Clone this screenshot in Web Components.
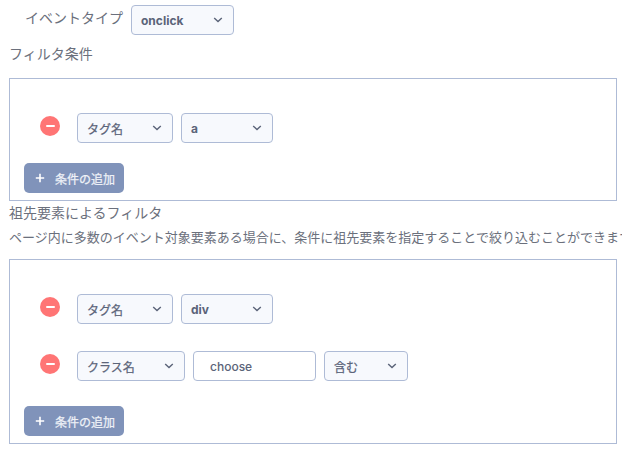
<!DOCTYPE html>
<html lang="ja"><head><meta charset="utf-8">
<style>
html,body{margin:0;padding:0;background:#fff;overflow:hidden;width:622px;height:450px}
body{font-family:"Noto Sans","Noto Sans CJK JP",sans-serif;color:#5a6172}
.j{font-weight:400;-webkit-text-stroke:.25px #5b6479}
</style></head><body>
<template id="t-select"><style>
:host{display:inline-flex;box-sizing:border-box;height:30px;align-items:center;justify-content:space-between;background:#f7f9fd;border:1px solid #aebbd6;border-radius:4px;padding:0 10px 0 9px;font:700 12px Inter,"Noto Sans CJK JP",sans-serif;color:#5b6479;flex:none}
svg{width:10px;height:6px;display:block}
</style><span><slot></slot></span><svg viewBox="0 0 10 6"><path d="M1.2 1l3.8 3.6L8.8 1" fill="none" stroke="#5b6479" stroke-width="1.4"/></svg></template>

<template id="t-minus"><style>
:host{display:block;width:20px;height:20px;border-radius:50%;background:#ff7575;position:relative;flex:none;margin:0 9px 4px 0}
i{position:absolute;left:5.5px;top:8.8px;width:9px;height:2.2px;border-radius:1px;background:#fff}
</style><i></i></template>

<template id="t-add"><style>
:host{display:inline-flex;box-sizing:border-box;width:100px;height:30px;align-items:center;background:#8093ba;border-radius:5px;color:#eef1f7;font:400 12px "Noto Sans CJK JP",sans-serif;-webkit-text-stroke:.25px #eef1f7;padding-left:11px;gap:10px}
svg{width:10px;height:10px;display:block;flex:none}
</style><svg viewBox="0 0 10 10"><path d="M5 .8v8.4M.8 5h8.4" stroke="#fff" stroke-width="1.6"/></svg><span><slot></slot></span></template>

<template id="t-row"><style>
:host{display:flex;align-items:center;gap:8px;padding-left:16px;height:30px}
</style><slot></slot></template>

<template id="t-box"><style>
:host{display:flex;flex-direction:column;box-sizing:border-box;width:608px;margin-left:9px;border:1px solid #aebbd6;padding:34px 14px 7px;background:#fff}
.rows{display:flex;flex-direction:column;gap:27px}
.foot{margin-top:var(--foot-gap,20px);display:flex}
</style><div class="rows"><slot></slot></div><div class="foot"><slot name="foot"></slot></div></template>

<template id="t-label"><style>
:host{display:block;font:14px/18px "Noto Sans CJK JP",sans-serif;color:#6b707c;white-space:nowrap;margin-left:9px}
</style><slot></slot></template>

<template id="t-top"><style>
:host{display:flex;align-items:center;gap:8px;padding:5px 0 0 25px;height:30px;font:14px "Noto Sans CJK JP",sans-serif;color:#6b707c}
span{margin-bottom:7px;width:98px;white-space:nowrap}
</style><span><slot name="label"></slot></span><slot></slot></template>

<template id="t-input"><style>
:host{display:flex;box-sizing:border-box;height:30px;align-items:center;background:#fff;border:1px solid #aebbd6;border-radius:4px;padding-left:16px;font:500 12px Inter,"Noto Sans CJK JP",sans-serif;color:#5b6479;flex:none}
</style><slot></slot></template>

<top-row><span slot="label">イベントタイプ</span><cond-select style="width:103px">onclick</cond-select></top-row>
<text-label style="margin-top:9px">フィルタ条件</text-label>
<cond-box style="margin-top:16px;height:123px">
  <cond-row><cond-minus></cond-minus><cond-select style="width:96px"><span class="j">タグ名</span></cond-select><cond-select style="width:92px">a</cond-select></cond-row>
  <add-button slot="foot">条件の追加</add-button>
</cond-box>
<text-label style="margin-top:2px">祖先要素によるフィルタ</text-label>
<text-label style="margin-top:7px;font-size:13px">ページ内に多数のイベント対象要素ある場合に、条件に祖先要素を指定することで絞り込むことができます。</text-label>
<cond-box style="margin-top:13px;height:185px;--foot-gap:25px">
  <cond-row><cond-minus></cond-minus><cond-select style="width:96px"><span class="j">タグ名</span></cond-select><cond-select style="width:92px">div</cond-select></cond-row>
  <cond-row><cond-minus></cond-minus><cond-select style="width:108px"><span class="j">クラス名</span></cond-select><cond-input style="width:123px">choose</cond-input><cond-select style="width:84px"><span class="j">含む</span></cond-select></cond-row>
  <add-button slot="foot">条件の追加</add-button>
</cond-box>
<script>
const reg=(n,t)=>customElements.define(n,class extends HTMLElement{constructor(){super();this.attachShadow({mode:"open"}).appendChild(document.getElementById(t).content.cloneNode(true))}});
reg("cond-select","t-select");reg("cond-minus","t-minus");reg("add-button","t-add");reg("cond-row","t-row");reg("cond-box","t-box");reg("text-label","t-label");reg("top-row","t-top");reg("cond-input","t-input");
</script>
</body></html>
